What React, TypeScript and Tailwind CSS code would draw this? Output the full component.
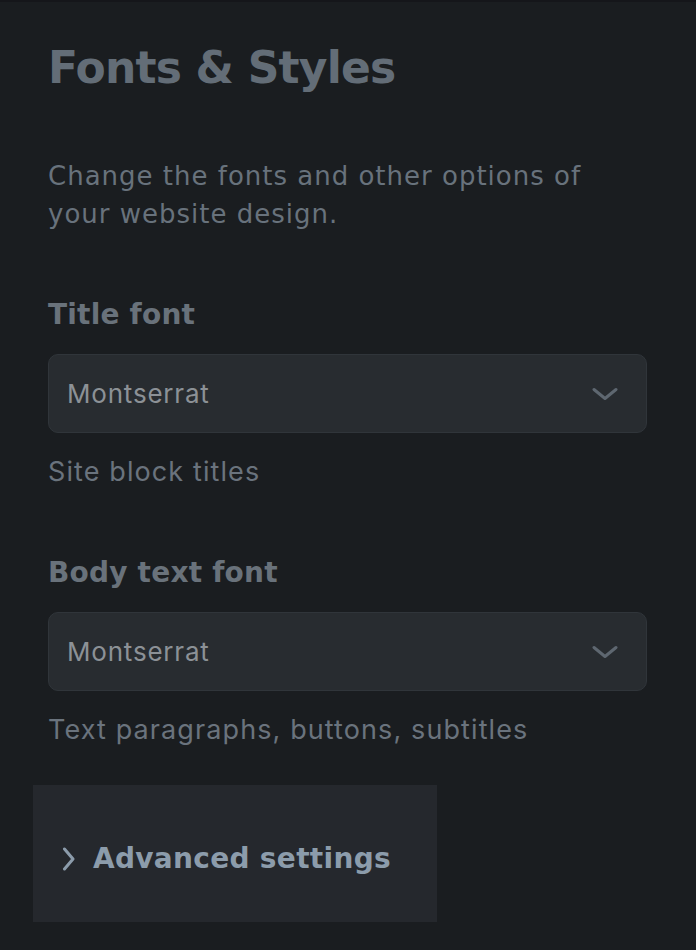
import { useState } from "react";

const heading = { fontFamily: "'DejaVu Sans', 'Open Sans', sans-serif" };
const ui = { fontFamily: "Inter, 'Noto Sans', sans-serif" };

const ChevronDown = () => (
   <svg width="26" height="14" viewBox="0 0 26 14" fill="none" className="text-[#5e6770]">
      <path d="M2 2.5 L13 11.5 L24 2.5" stroke="currentColor" strokeWidth="3" strokeLinecap="round" strokeLinejoin="round" />
   </svg>
);

const ChevronRight = () => (
   <svg width="16" height="24" viewBox="0 0 16 24" fill="none" className="text-[#8c9cab]">
      <path d="M3.5 2 L12 12 L3.5 22" stroke="currentColor" strokeWidth="3" strokeLinecap="round" strokeLinejoin="round" />
   </svg>
);

interface FontSelectProps {
   label: string;
   value: string;
   hint: string;
   className?: string;
}

const FontSelect = ({ label, value, hint, className }: FontSelectProps) => {
   return (
      <div className={className}>
         <h3 className="text-[28px] leading-[40px] font-bold tracking-[0.2px] text-[#69727b]" style={heading}>
            {label}
         </h3>
         <button className="mt-[19px] flex h-[79px] w-full items-center justify-between rounded-[10px] border border-[#30353a] bg-[#282c30] pr-[28px] pl-[18px]">
            <span className="text-[26px] tracking-[0.8px] text-[#8c9196]" style={ui}>
               {value}
            </span>
            <ChevronDown />
         </button>
         <p className="mt-[21px] text-[27px] leading-[36px] tracking-[1.1px] text-[#6a737d]" style={ui}>
            {hint}
         </p>
      </div>
   );
};

export default function App() {
   const [open, setOpen] = useState(false);

   return (
      <div className="min-h-screen w-full border-t-2 border-[#15161a] bg-[#1a1d20]">
         <div className="pt-[38px] pr-[49px] pl-[48px]">
            <h1 className="text-[44px] leading-[56px] font-bold tracking-[-0.8px] text-[#636d77]" style={heading}>
               Fonts &amp; Styles
            </h1>
            <p className="mt-[61px] text-[26px] leading-[38px] tracking-[1px] text-[#68727c]" style={heading}>
               Change the fonts and other options of
               <br />
               your website design.
            </p>

            <FontSelect className="mt-[62px]" label="Title font" value="Montserrat" hint="Site block titles" />
            <FontSelect className="mt-[63px]" label="Body text font" value="Montserrat" hint="Text paragraphs, buttons, subtitles" />

            <button
               onClick={() => setOpen(!open)}
               className="mt-[37px] -ml-[15px] flex h-[137px] w-[404px] items-center gap-[16px] bg-[#25282d] pt-[10px] pl-[28px]"
            >
               <ChevronRight />
               <span className="text-[28px] font-bold tracking-[0.3px] text-[#8c9cab]" style={heading}>
                  Advanced settings
               </span>
            </button>
         </div>
      </div>
   );
}
